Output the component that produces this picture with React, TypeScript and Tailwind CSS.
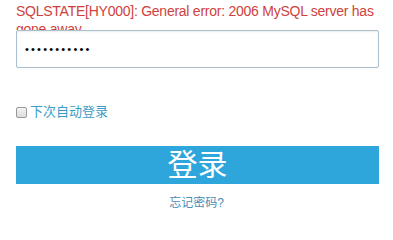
export default function App() {
  return (
    <div
      className="w-[393px] h-[220px] bg-white px-4 overflow-hidden"
      style={{ fontFamily: '"Liberation Sans", "Noto Sans CJK SC", sans-serif' }}
    >
      {/* error message, clipped by the input below */}
      <div className="h-[30px] overflow-hidden pt-[2px] text-[14px] leading-[18px] tracking-[-0.25px] text-[#cf3f3c]">
        SQLSTATE[HY000]: General error: 2006 MySQL server has gone away
      </div>

      <input
        type="password"
        readOnly
        value="12345678901"
        className="block w-[363px] h-[38px] border border-[#a9c0cf] rounded-[2px] pl-2 text-[11px] tracking-[2.2px] text-black outline-none shadow-[inset_0_1px_2px_rgba(0,0,0,0.08)]"
      />

      <label className="flex items-center mt-[37px] h-[14px] text-[13px] text-[#3a9cc6]">
        <span className="w-[11px] h-[11px] border border-[#9a9a9a] rounded-[2px] bg-gradient-to-b from-[#f4f4f4] to-[#dcdcdc] mr-[3px]" />
        下次自动登录
      </label>

      <button className="block w-[363px] h-[38px] mt-[27px] bg-[#2ea6dc] text-white text-[30px] leading-[38px]">
        登录
      </button>

      <div className="mt-[10px] text-center text-[12px] text-[#4a8cb3]">
        忘记密码?
      </div>
    </div>
  );
}
